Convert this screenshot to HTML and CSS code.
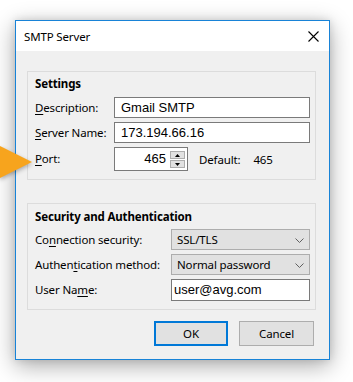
FILE: index.html
```html
<!DOCTYPE html>
<html>
<head>
<meta charset="utf-8">
<link rel="stylesheet" href="styles.css">
</head>
<body>
<div class="window">
  <div class="titlebar">
    <span class="title">SMTP Server</span>
    <svg class="close" width="11" height="11" viewBox="0 0 11 11"><path d="M0.5 0.5L10.5 10.5M10.5 0.5L0.5 10.5" stroke="#000" stroke-width="1.1" fill="none"/></svg>
  </div>
  <div class="body">
    <div class="group settings">
      <div class="group-title">Settings</div>
      <div class="row">
        <span class="lbl"><u>D</u>escription:</span>
        <div class="textbox grow">Gmail SMTP</div>
      </div>
      <div class="row">
        <span class="lbl"><u>S</u>erver Name:</span>
        <div class="textbox grow">173.194.66.16</div>
      </div>
      <div class="row port-row">
        <span class="lbl"><u>P</u>ort:</span>
        <div class="spinbox">
          <span class="spin-value">465</span>
          <div class="spin-buttons">
            <div class="spin-btn"><svg width="7" height="4" viewBox="0 0 7 4"><path d="M3.5 0L7 4H0Z" fill="#000"/></svg></div>
            <div class="spin-btn"><svg width="7" height="4" viewBox="0 0 7 4"><path d="M0 0H7L3.5 4Z" fill="#000"/></svg></div>
          </div>
        </div>
        <span class="default-lbl">Default:</span>
        <span class="default-val">465</span>
      </div>
    </div>
    <div class="group security">
      <div class="group-title">Security and Authentication</div>
      <div class="row">
        <span class="lbl wide">Co<u>n</u>nection security:</span>
        <div class="select grow"><span>SSL/TLS</span><svg width="9" height="5" viewBox="0 0 9 5"><path d="M0.5 0.5L4.5 4.5L8.5 0.5" stroke="#606060" fill="none"/></svg></div>
      </div>
      <div class="row">
        <span class="lbl wide">Authen<u>t</u>ication method:</span>
        <div class="select grow"><span>Normal password</span><svg width="9" height="5" viewBox="0 0 9 5"><path d="M0.5 0.5L4.5 4.5L8.5 0.5" stroke="#606060" fill="none"/></svg></div>
      </div>
      <div class="row user-row">
        <span class="lbl wide">User Na<u>m</u>e:</span>
        <div class="textbox grow user">user@avg.com</div>
      </div>
    </div>
    <div class="buttons">
      <div class="btn default">OK</div>
      <div class="btn cancel">Cancel</div>
    </div>
  </div>
</div>
<svg class="arrow" width="40" height="44" viewBox="0 0 40 44"><path d="M-4 2L32 20L-4 38Z" fill="#f7a41d"/></svg>
</body>
</html>
```
FILE: styles.css
```css
html, body {
  margin: 0;
  padding: 0;
  background: #ffffff;
}
body {
  font-family: "Noto Sans", "Open Sans", sans-serif;
  font-size: 11.5px;
  letter-spacing: -0.15px;
  color: #000;
  position: relative;
  width: 353px;
  height: 382px;
  overflow: hidden;
}
.window {
  margin: 20px 0 0 15px;
  width: 313px;
  border: 1px solid #1883d7;
  background: #f0f0f0;
  box-shadow: 0 6px 22px rgba(0, 0, 0, 0.33), 0 0 8px rgba(0, 0, 0, 0.12);
}
.titlebar {
  height: 30px;
  background: #ffffff;
  display: flex;
  align-items: center;
  justify-content: space-between;
  padding: 0 10px 0 8px;
}
.title {
  line-height: 16px;
  margin-top: 1px;
}
.close {
  display: block;
  margin-top: 0px;
}
.body {
  padding: 20px 13px 13px 11px;
}
.group {
  border: 1px solid #dcdcdc;
}
.settings {
  padding: 4px 5px 8px 7px;
}
.security {
  margin-top: 23px;
  padding: 5px 5px 8px 7px;
}
.group-title {
  font-weight: bold;
  line-height: 16px;
  height: 16px;
  margin-bottom: 5px;
}
.security .group-title {
  margin-bottom: 4px;
}
.row {
  display: flex;
  align-items: center;
  height: 21px;
  margin-bottom: 4px;
}
.row:last-child {
  margin-bottom: 0;
}
.port-row {
  height: 24px;
}
.user-row {
  height: 22px;
}
.lbl {
  width: 79px;
  flex: none;
  line-height: 16px;
  white-space: nowrap;
}
.lbl.wide {
  width: 136px;
}
u {
  text-decoration-thickness: 1px;
  text-underline-offset: 2px;
}
.grow {
  flex: 1;
  align-self: stretch;
}
.textbox {
  box-sizing: border-box;
  border: 1px solid #7a7a7a;
  background: #fff;
  font-family: "Liberation Sans", Arial, sans-serif;
  font-size: 13px;
  letter-spacing: 0;
  line-height: 19px;
  padding-left: 6px;
  white-space: nowrap;
}
.textbox.user {
  line-height: 20px;
  padding-left: 2px;
}
.spinbox {
  box-sizing: border-box;
  width: 74px;
  height: 24px;
  border: 1px solid #7a7a7a;
  background: #fff;
  display: flex;
  align-items: center;
  justify-content: flex-end;
  padding-right: 2px;
}
.spin-value {
  font-family: "Liberation Sans", Arial, sans-serif;
  font-size: 13px;
  letter-spacing: 0;
  margin-right: 4px;
  line-height: 16px;
}
.spin-buttons {
  display: flex;
  flex-direction: column;
  width: 15px;
  height: 17px;
  margin-top: 1px;
}
.spin-btn {
  box-sizing: border-box;
  height: 8px;
  flex: none;
  background: #e1e1e1;
  border: 1px solid #adadad;
  display: flex;
  align-items: center;
  justify-content: center;
}
.spin-btn + .spin-btn {
  margin-top: 1px;
}
.spin-btn svg {
  width: 5px;
  height: 3px;
  display: block;
}
.default-lbl {
  margin-left: 11px;
  line-height: 16px;
  margin-top: 2px;
}
.default-val {
  margin-left: 13px;
  line-height: 16px;
  margin-top: 2px;
}
.select {
  box-sizing: border-box;
  border: 1px solid #adadad;
  background: #e1e1e1;
  display: flex;
  align-items: center;
  justify-content: space-between;
  padding: 0 5px 0 5px;
  line-height: 16px;
}
.select svg {
  display: block;
  margin-top: 1px;
}
.buttons {
  display: flex;
  justify-content: flex-end;
  gap: 11px;
  margin-top: 11px;
  margin-right: 2px;
}
.btn {
  box-sizing: border-box;
  height: 25px;
  background: #e1e1e1;
  border: 1px solid #adadad;
  display: flex;
  align-items: center;
  justify-content: center;
  line-height: 16px;
}
.btn.default {
  width: 74px;
  border: 2px solid #0078d7;
}
.btn.cancel {
  width: 75px;
}
.arrow {
  position: absolute;
  left: 0;
  top: 142px;
  filter: drop-shadow(0 2px 2px rgba(0, 0, 0, 0.3));
}
```
